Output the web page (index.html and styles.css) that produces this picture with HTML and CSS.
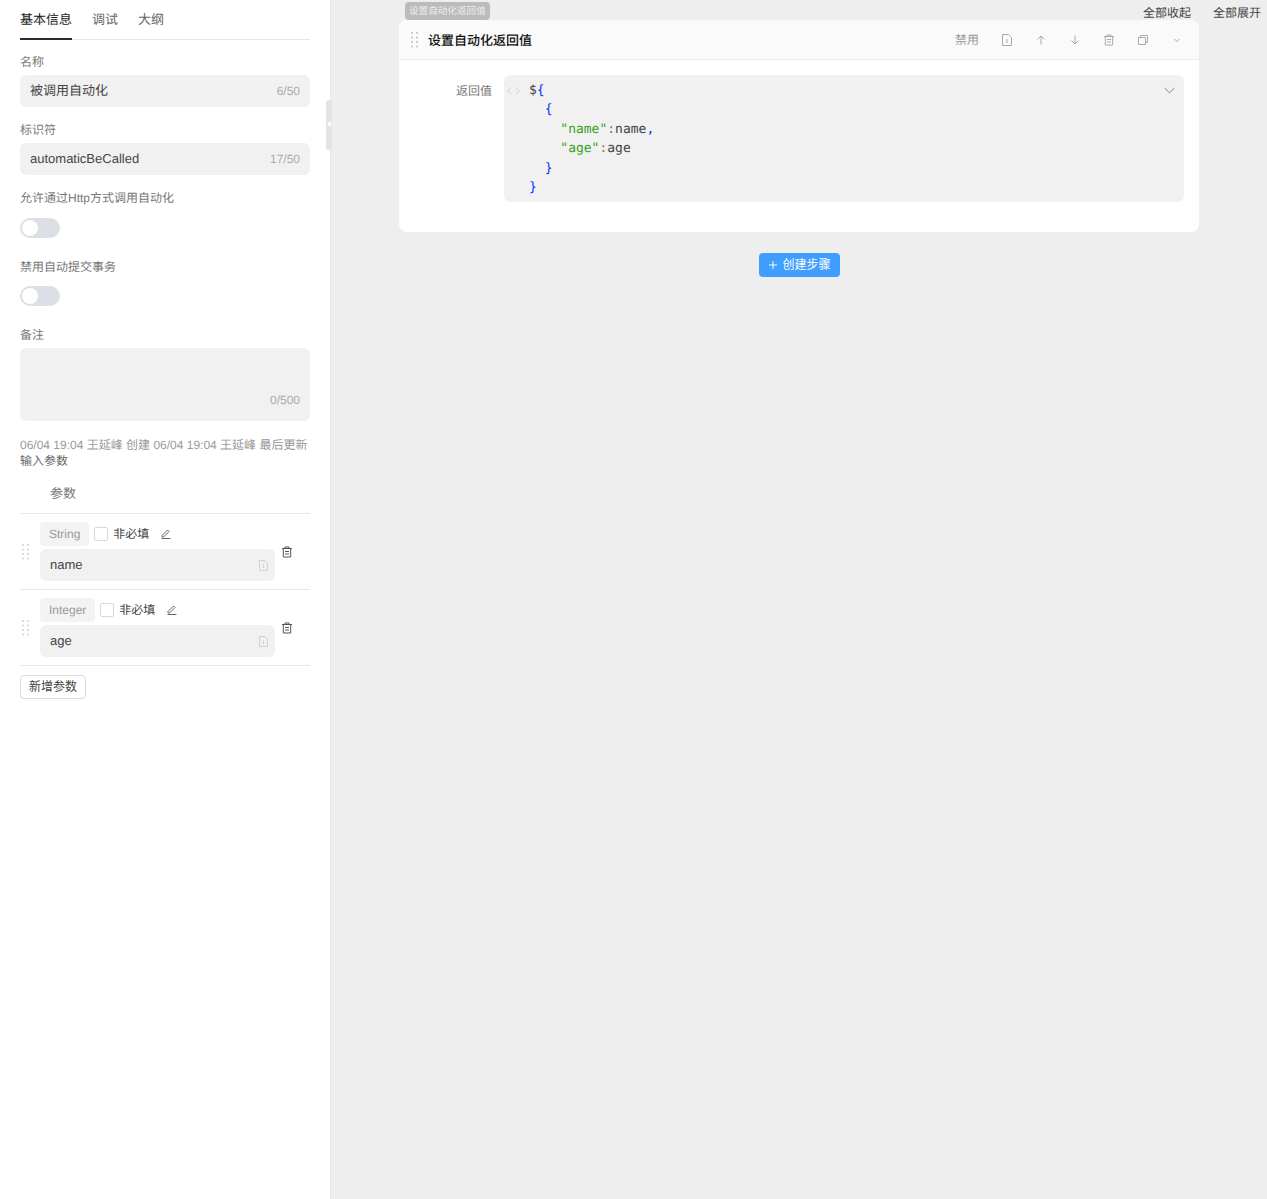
FILE: index.html
```html
<!DOCTYPE html>
<html lang="zh">
<head>
<meta charset="utf-8">
<title>被调用自动化</title>
<link rel="stylesheet" href="styles.css">
</head>
<body>
<svg class="defs" width="0" height="0" aria-hidden="true">
  <symbol id="grip" viewBox="0 0 8 16"><g fill="currentColor"><rect x="0" y="0" width="2" height="2"/><rect x="5" y="0" width="2" height="2"/><rect x="0" y="4.5" width="2" height="2"/><rect x="5" y="4.5" width="2" height="2"/><rect x="0" y="9" width="2" height="2"/><rect x="5" y="9" width="2" height="2"/><rect x="0" y="13.5" width="2" height="2"/><rect x="5" y="13.5" width="2" height="2"/></g></symbol>
  <symbol id="trash" viewBox="0 0 12 12"><path d="M1 2.5h10M4 2.5V1h4v1.500M2.300 2.500V11h7.400V2.500M4 5.500h4M4 8h4" fill="none" stroke="currentColor" stroke-width="1"/></symbol>
  <symbol id="doc" viewBox="0 0 10 12"><path d="M.5 .5h6l3 3v8h-9zM5 5v4" fill="none" stroke="currentColor" stroke-width="1"/></symbol>
</svg>
<div class="app">
  <aside class="side">
    <nav class="tabs">
      <span class="tab active">基本信息</span>
      <span class="tab">调试</span>
      <span class="tab">大纲</span>
    </nav>
    <div class="field">
      <label class="label">名称</label>
      <div class="input"><span class="val">被调用自动化</span><span class="count">6/50</span></div>
    </div>
    <div class="field">
      <label class="label">标识符</label>
      <div class="input"><span class="val">automaticBeCalled</span><span class="count">17/50</span></div>
    </div>
    <div class="field">
      <label class="label">允许通过Http方式调用自动化</label>
      <div class="switch"><i class="knob"></i></div>
    </div>
    <div class="field">
      <label class="label">禁用自动提交事务</label>
      <div class="switch"><i class="knob"></i></div>
    </div>
    <div class="field">
      <label class="label">备注</label>
      <div class="textarea"><span class="count">0/500</span></div>
    </div>
    <p class="meta">06/04 19:04 王延峰 创建 06/04 19:04 王延峰 最后更新</p>
    <div class="section-title">输入参数</div>
    <div class="param-head">参数</div>
    <div class="param">
      <svg class="grip"><use href="#grip"/></svg>
      <div class="param-main">
        <div class="param-top">
          <span class="type">String</span><span class="check"></span><span class="req">非必填</span>
          <svg class="edit" viewBox="0 0 12 12"><path d="M2 7.500 7.500 2 9 3.500 3.500 9H2zM1.500 10.500h9" fill="none" stroke="currentColor"/></svg>
        </div>
        <div class="param-input"><span class="param-name">name</span><svg class="doc"><use href="#doc"/></svg></div>
      </div>
      <svg class="trash"><use href="#trash"/></svg>
    </div>
    <div class="param">
      <svg class="grip"><use href="#grip"/></svg>
      <div class="param-main">
        <div class="param-top">
          <span class="type">Integer</span><span class="check"></span><span class="req">非必填</span>
          <svg class="edit" viewBox="0 0 12 12"><path d="M2 7.500 7.500 2 9 3.500 3.500 9H2zM1.500 10.500h9" fill="none" stroke="currentColor"/></svg>
        </div>
        <div class="param-input"><span class="param-name">age</span><svg class="doc"><use href="#doc"/></svg></div>
      </div>
      <svg class="trash"><use href="#trash"/></svg>
    </div>
    <button class="add-param">新增参数</button>
    <div class="handle"><i></i></div>
  </aside>
  <main class="main">
    <div class="toolbar">
      <span class="badge">设置自动化返回值</span>
      <div class="links"><span>全部收起</span><span>全部展开</span></div>
    </div>
    <section class="card">
      <header class="card-head">
        <svg class="grip head-grip"><use href="#grip"/></svg>
        <h2 class="card-title">设置自动化返回值</h2>
        <div class="actions">
          <span class="act-text">禁用</span>
          <svg class="act"><use href="#doc"/></svg>
          <svg class="act" viewBox="0 0 12 12"><path d="M6 10.500V2M2.500 5.500 6 2l3.500 3.500" fill="none" stroke="currentColor"/></svg>
          <svg class="act" viewBox="0 0 12 12"><path d="M6 1.500V10M2.500 6.500 6 10l3.500-3.500" fill="none" stroke="currentColor"/></svg>
          <svg class="act"><use href="#trash"/></svg>
          <svg class="act" viewBox="0 0 12 12"><path d="M1.500 3.500h7v7h-7zM3.500 3.500v-2h7v7h-2" fill="none" stroke="currentColor"/></svg>
          <svg class="act" viewBox="0 0 12 12"><path d="M3.500 5 6 7.500 8.500 5" fill="none" stroke="currentColor"/></svg>
        </div>
      </header>
      <div class="card-body">
        <label class="code-label">返回值</label>
        <div class="editor">
          <svg class="code-icon" viewBox="0 0 14 10"><path d="M4.500 1 .8 5l3.700 4M9.500 1l3.700 4-3.700 4" fill="none" stroke="currentColor"/></svg>
          <pre class="code"><span class="plain">$</span><span class="br">{</span>
  <span class="br">{</span>
    <span class="str">"name"</span><span class="col">:</span><span class="plain">name</span><span class="br">,</span>
    <span class="str">"age"</span><span class="col">:</span><span class="plain">age</span>
  <span class="br">}</span>
<span class="br">}</span></pre>
          <svg class="code-chevron" viewBox="0 0 12 7"><path d="M.7 .8 6 6l5.300-5.200" fill="none" stroke="currentColor"/></svg>
        </div>
      </div>
    </section>
    <div class="create-row">
      <button class="create">
        <svg class="plus" viewBox="0 0 8 8"><path d="M4 0v8M0 4h8" fill="none" stroke="currentColor"/></svg>
        <span class="create-text">创建步骤</span>
      </button>
    </div>
  </main>
</div>
</body>
</html>
```
FILE: styles.css
```css
* { box-sizing: border-box; }
html, body { margin: 0; height: 100%; }
body {
  font-family: "Liberation Sans", "Noto Sans CJK SC", sans-serif;
  font-size: 12px;
  color: #333;
  background: #eee;
  text-rendering: geometricPrecision;
}
.defs { position: absolute; }
.app { display: flex; height: 1199px; overflow: hidden; }

.side {
  position: relative;
  width: 331px;
  flex: none;
  background: #fff;
  border-right: 1px solid #e4e4e4;
  padding: 0 20px;
}
.tabs {
  display: flex;
  gap: 20px;
  height: 40px;
  border-bottom: 1px solid #e6e6e6;
  font-size: 13px;
}
.tab {
  height: 40px;
  line-height: 39px;
  color: #666;
}
.tab.active { color: #222; border-bottom: 2px solid #2b2b2b; }

.field { padding-top: 15px; }
.tabs + .field { padding-top: 14px; }
.label { display: block; height: 21px; line-height: 17px; color: #777; }
.input {
  display: flex;
  justify-content: space-between;
  align-items: center;
  height: 32px;
  padding: 0 10px;
  background: #f1f1f1;
  border-radius: 6px;
}
.val { font-size: 13px; line-height: 18px; color: #444; }
.count { color: #aaa; }
.switch {
  width: 40px;
  height: 20px;
  margin: 6.5px 0 6px;
  background: #dcdfe6;
  border-radius: 10px;
  padding: 2px;
}
.knob { display: block; width: 16px; height: 16px; border-radius: 50%; background: #fff; }
.textarea {
  display: flex;
  align-items: flex-end;
  justify-content: flex-end;
  height: 73px;
  padding: 0 10px 14px;
  background: #f1f1f1;
  border-radius: 6px;
  line-height: 14px;
}
.meta { margin: 16px 0 0; line-height: 16px; color: #999; white-space: nowrap; }
.section-title { line-height: 16px; color: #666; }
.param-head {
  height: 45px;
  padding: 17px 0 0 30px;
  font-size: 13px;
  line-height: 16px;
  color: #777;
  border-bottom: 1px solid #e8e8e8;
}
.param {
  display: flex;
  align-items: center;
  height: 76px;
  border-bottom: 1px solid #e8e8e8;
}
.grip { width: 8px; height: 16px; color: #ddd; flex: none; }
.param > .grip { margin: 0 10px 0 2px; }
.param-main { width: 235px; flex: none; }
.param-top { display: flex; align-items: center; height: 24px; margin-bottom: 3px; }
.type {
  height: 24px;
  line-height: 24px;
  padding: 0 9px;
  background: #f3f3f3;
  border-radius: 4px;
  color: #999;
}
.check {
  width: 14px;
  height: 14px;
  margin: 0 5px;
  border: 1px solid #d9d9d9;
  border-radius: 2px;
  background: #fff;
}
.req { color: #444; line-height: 16px; }
.edit { width: 12px; height: 12px; margin-left: 11px; color: #666; }
.param-input {
  display: flex;
  align-items: center;
  justify-content: space-between;
  height: 32px;
  padding: 0 7px 0 10px;
  background: #f1f1f1;
  border-radius: 6px;
  font-size: 13px;
  color: #444;
}
.param-name { line-height: 16px; }
.doc { width: 9px; height: 11px; color: #ccc; }
.trash { width: 12px; height: 12px; margin: 0 0 0 6px; color: #555; }
.add-param {
  display: block;
  width: 66px;
  height: 24px;
  margin-top: 9px;
  padding: 0 0 4px;
  background: #fff;
  border: 1px solid #d9d9e0;
  border-radius: 4px;
  font: inherit;
  color: #444;
}
.handle {
  position: absolute;
  top: 100px;
  left: 326px;
  width: 6px;
  height: 50px;
  border-radius: 3px;
  background: #e4e4e4;
}
.handle i {
  position: absolute;
  top: 21px;
  left: 1px;
  border: 3px solid transparent;
  border-left-width: 0;
  border-right: 4px solid #fff;
}

.main { flex: 1; min-width: 0; background: #eee; }
.toolbar {
  display: flex;
  align-items: flex-end;
  justify-content: space-between;
  height: 20px;
  padding: 0 6px 0 74px;
}
.badge {
  height: 18px;
  padding: 1px 4px 0;
  line-height: 18px;
  font-size: 9.6px;
  color: #eee;
  background: #bbb;
  border-radius: 4px;
}
.links { display: flex; gap: 22px; align-self: flex-start; padding-top: 5px; line-height: 16px; color: #444; }
.card {
  width: 800px;
  margin-left: 68px;
  height: 212px;
  background: #fff;
  border-radius: 8px;
  overflow: hidden;
}
.card-head {
  display: flex;
  align-items: center;
  height: 40px;
  padding: 0 16px 0 12px;
  background: #fafafa;
  border-bottom: 1px solid #ececec;
}
.head-grip { color: #ccc; margin-right: 9px; }
.card-title { margin: 2px 0 0; font-size: 13px; line-height: 18px; font-weight: 500; color: #111; }
.actions { display: flex; align-items: center; gap: 22px; margin-left: auto; color: #aaa; }
.act-text { color: #999; line-height: 16px; }
.act { width: 12px; height: 12px; }
.card-body { display: flex; align-items: flex-start; padding: 15px 15px 0 0; }
.code-label { width: 93px; margin-right: 12px; text-align: right; line-height: 33px; color: #777; }
.editor {
  position: relative;
  flex: 1;
  height: 127px;
  background: #f1f1f1;
  border-radius: 6px;
  padding: 5.6px 0 0 25px;
}
.code-icon { position: absolute; left: 3px; top: 11px; width: 13px; height: 10px; color: #ccc; }
.code-chevron { position: absolute; right: 9px; top: 12px; width: 11px; height: 7px; color: #777; }
.code {
  margin: 0;
  font-family: "DejaVu Sans Mono", monospace;
  font-size: 13px;
  line-height: 19.5px;
  color: #444;
  white-space: pre;
}
.code .br { color: #0431fa; }
.code .str { color: #3aa31a; }
.code .col { color: #a6714a; }
.code .plain { color: #444; }
.create-row { display: flex; justify-content: center; margin: 21px 68px 0; }
.create {
  display: flex;
  align-items: center;
  justify-content: center;
  gap: 5px;
  height: 24px;
  width: 81px;
  padding: 0 0 0 2px;
  border: 0;
  border-radius: 4px;
  background: #409eff;
  color: #fff;
  font: inherit;
}
.create-text { line-height: 16px; }
.plus { width: 8px; height: 8px; }
```
